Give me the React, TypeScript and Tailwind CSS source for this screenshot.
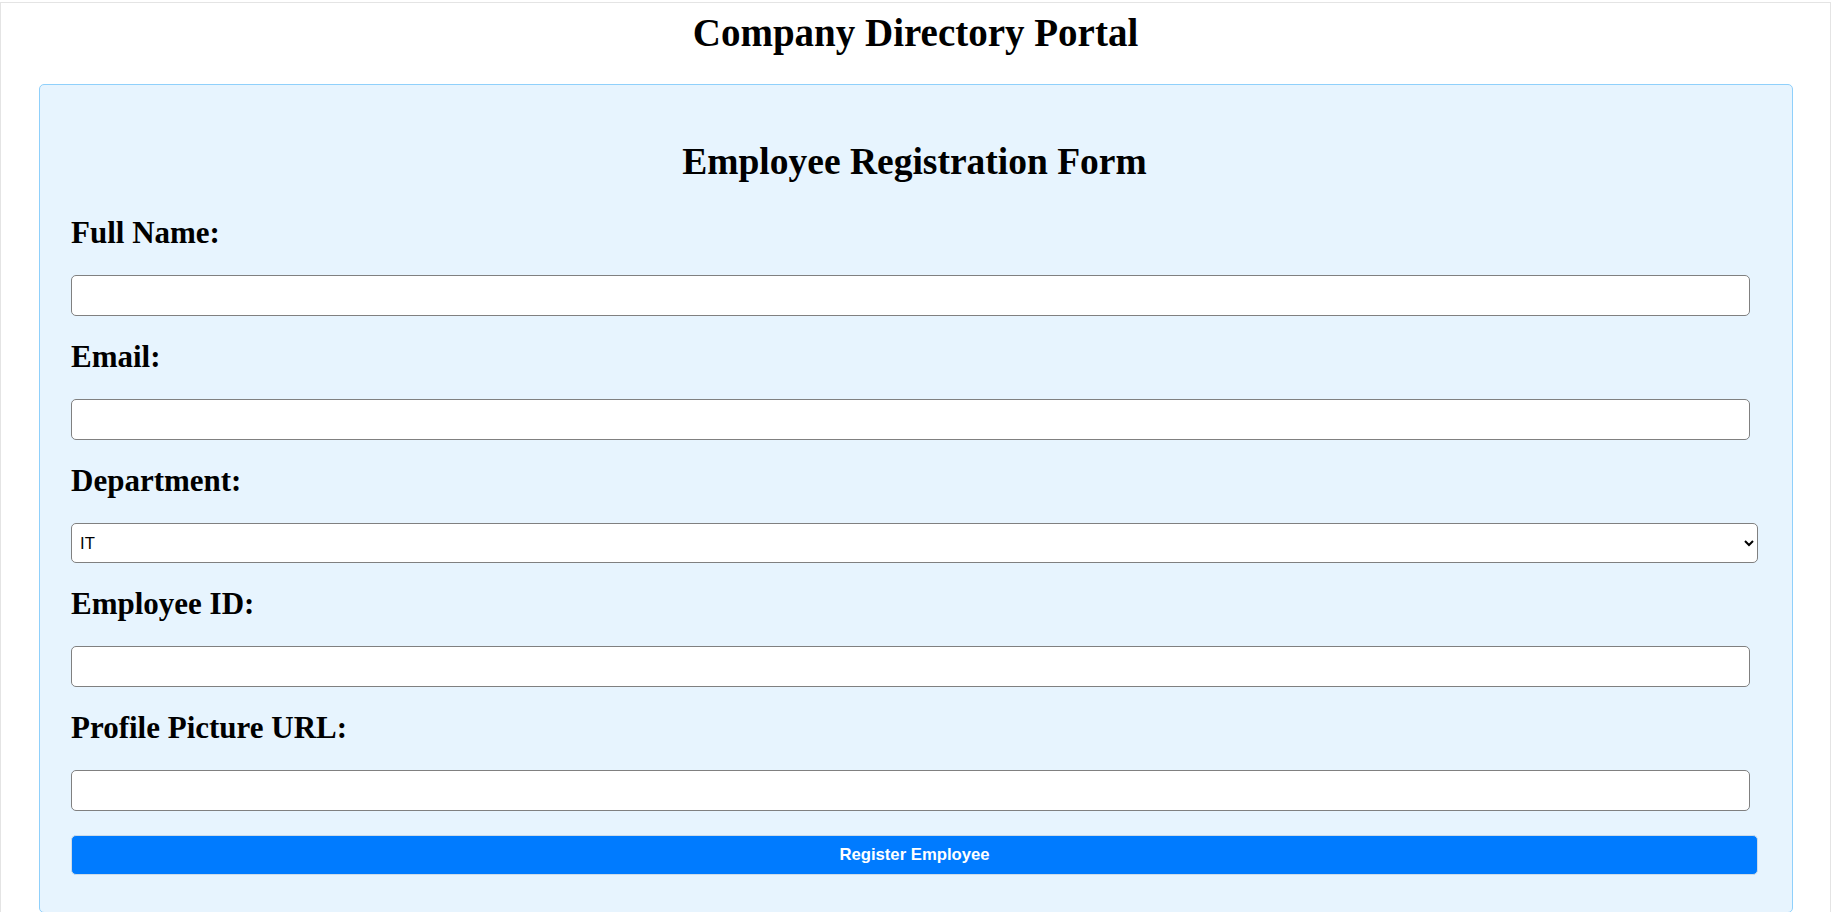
import { useState } from "react";

const fields = [
  { id: "name", label: "Full Name:", type: "text" },
  { id: "email", label: "Email:", type: "email" },
  { id: "department", label: "Department:", type: "select" },
  { id: "employeeId", label: "Employee ID:", type: "text" },
  { id: "photo", label: "Profile Picture URL:", type: "url" },
];

const departments = ["IT", "HR", "Finance", "Marketing", "Operations"];

export default function App() {
  const [values, setValues] = useState<Record<string, string>>({ department: "IT" });

  const update = (id: string, v: string) => {
    setValues((prev) => ({ ...prev, [id]: v }));
  };

  return (
    <div className="min-h-[912px] bg-white">
      <div className="mt-[2px] border border-[#e4e4e4] min-h-[910px]">
        {/* page title */}
        <h1 className="mt-[8px] mb-[29px] text-center text-[39px] leading-[44px] font-bold text-black [font-family:'Liberation_Serif',serif]">
          Company Directory Portal
        </h1>

        <div className="ml-[38px] mr-[37px] rounded-[5px] border border-[#8fd0fb] bg-[#e7f4fe] pl-[31px] pr-[34px] pt-[31px] pb-[37px]">
          <h2 className="mt-[25px] mb-[32px] text-center text-[37.5px] leading-[42px] font-bold text-black [font-family:'Liberation_Serif',serif]">
            Employee Registration Form
          </h2>

          <form onSubmit={(e) => e.preventDefault()} className="flex flex-col">
            {fields.map((f) => (
              <div key={f.id} className="mb-[23px] flex flex-col">
                <label
                  htmlFor={f.id}
                  className="h-[36px] text-[31px] leading-[36px] font-bold text-black [font-family:'Liberation_Serif',serif]"
                >
                  {f.label}
                </label>

                {f.type === "select" ? (
                  <select
                    id={f.id}
                    value={values[f.id] ?? ""}
                    onChange={(e) => update(f.id, e.target.value)}
                    className="mt-[24px] h-[40px] w-full rounded-[5px] border border-[#808080] bg-white pl-[4px] text-[16.7px] text-black [font-family:'Liberation_Sans',Arial,sans-serif]"
                  >
                    {departments.map((d) => (
                      <option key={d} value={d}>
                        {d}
                      </option>
                    ))}
                  </select>
                ) : (
                  <input
                    id={f.id}
                    type={f.type}
                    value={values[f.id] ?? ""}
                    onChange={(e) => update(f.id, e.target.value)}
                    className="mt-[24px] h-[41px] w-[calc(100%-8px)] rounded-[5px] border border-[#808080] bg-white px-[10px] text-[16.7px] text-black [font-family:'Liberation_Sans',Arial,sans-serif]"
                  />
                )}
              </div>
            ))}

            <button
              type="submit"
              className="mt-[1px] h-[40px] w-full rounded-[5px] border border-[#cddbe8] bg-[#007bff] text-[16.7px] font-bold text-white [font-family:'Liberation_Sans',Arial,sans-serif]"
            >
              Register Employee
            </button>
          </form>
        </div>
      </div>
    </div>
  );
}
